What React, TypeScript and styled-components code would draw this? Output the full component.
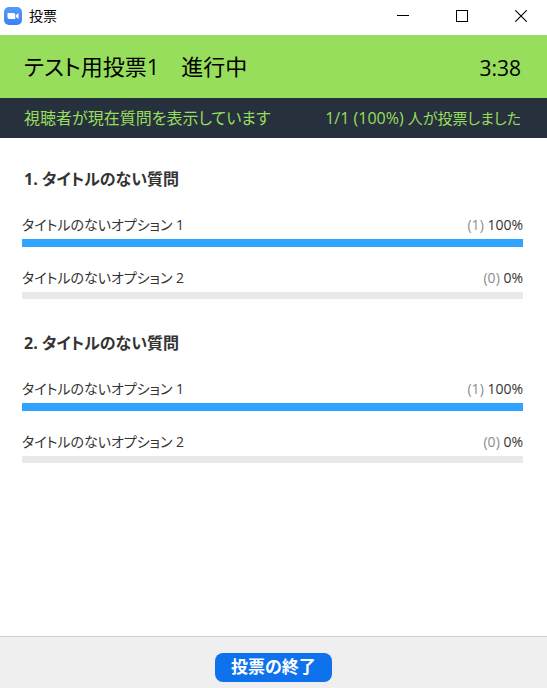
import React from 'react';
import styled, { createGlobalStyle } from 'styled-components';

const GlobalStyle = createGlobalStyle`
  *, *::before, *::after { box-sizing: border-box; }
  body {
    margin: 0;
    background: #fff;
    color: #333;
    font-family: "Open Sans", "Noto Sans CJK JP", sans-serif;
    font-feature-settings: "palt";
  }
`;

const Window = styled.div`
  display: flex;
  flex-direction: column;
  min-height: 100vh;
`;

const TitleBar = styled.header`
  display: flex;
  align-items: center;
  height: 35px;
  padding-left: 4px;
  padding-bottom: 3px;
  color: #000;
`;

const AppName = styled.span`
  flex: 1;
  margin-left: 7px;
  font-size: 14px;
  line-height: 20px;
`;

const WindowControls = styled.div`
  display: flex;
  gap: 7px;
`;

const WindowButton = styled.button`
  display: flex;
  align-items: center;
  justify-content: center;
  width: 52px;
  height: 32px;
  padding: 0;
  border: 0;
  background: transparent;
  color: #000;
`;

const PollHeader = styled.div`
  display: flex;
  align-items: center;
  justify-content: space-between;
  height: 63px;
  padding: 0 26px 0 24px;
  background: #98de5d;
  color: #000;
`;

const PollTitle = styled.h1`
  margin: 0;
  padding-bottom: 2px;
  font-size: 22px;
  font-weight: 400;
  line-height: 32px;
`;

const Timer = styled.time`
  padding-top: 2px;
  font-size: 21px;
  line-height: 28px;
`;

const StatusBar = styled.div`
  display: flex;
  align-items: center;
  justify-content: space-between;
  height: 40px;
  padding: 0 26px 0 24px;
  background: #27313d;
  color: #98de5d;
  font-size: 16px;
  line-height: 24px;
`;

const VoteLabel = styled.span`
  font-size: 15px;
`;

const Content = styled.main`
  flex: 1;
  padding: 29px 24px 24px 22px;
`;

const Question = styled.section`
  margin-bottom: 32px;
`;

const QuestionTitle = styled.h2`
  margin: 0 0 21px 2px;
  font-size: 16px;
  font-weight: 700;
  line-height: 24px;
`;

const OptionList = styled.ul`
  display: grid;
  gap: 18px;
  margin: 0;
  padding: 0;
  list-style: none;
`;

const OptionRow = styled.div`
  display: flex;
  justify-content: space-between;
  height: 27px;
  font-size: 14px;
  line-height: 26px;
`;

const Votes = styled.span`
  color: #8c8c8c;
`;

const Track = styled.div<{ $empty: boolean }>`
  height: ${({ $empty }) => ($empty ? 7 : 8)}px;
  background: #e9e9e9;
`;

const Fill = styled.div`
  height: 100%;
  background: #2ea3ff;
`;

const Footer = styled.footer`
  display: flex;
  justify-content: center;
  height: 52px;
  padding-top: 16px;
  border-top: 1px solid #d0d0d0;
  background: #efefef;
`;

const EndButton = styled.button`
  height: 29px;
  padding: 0 16px 2px;
  border: 0;
  border-radius: 8px;
  background: #0e72ed;
  color: #fff;
  font: inherit;
  font-feature-settings: inherit;
  font-size: 17px;
  font-weight: 700;
  line-height: 24px;
`;

const questions = [1, 2].map((number) => ({
  number,
  title: 'タイトルのない質問',
  options: [
    { label: 'タイトルのないオプション 1', votes: 1, percent: 100 },
    { label: 'タイトルのないオプション 2', votes: 0, percent: 0 },
  ],
}));

const CameraLogo = () => (
  <svg width="18" height="18" viewBox="0 0 18 18" aria-hidden="true">
    <defs>
      <linearGradient id="logo" x1="0" y1="0" x2="0" y2="1">
        <stop offset="0" stopColor="#549bf8" />
        <stop offset="1" stopColor="#3c80f7" />
      </linearGradient>
    </defs>
    <rect width="18" height="18" rx="5" fill="url(#logo)" />
    <path d="M3.5 6h6a1.8 1.8 0 0 1 1.8 1.8V12h-6a1.8 1.8 0 0 1-1.8-1.8zM12 8l2.6-1.9v5.8L12 10z" fill="#fff" />
  </svg>
);

export default function App() {
  return (
    <Window>
      <GlobalStyle />
      <TitleBar>
        <CameraLogo />
        <AppName>投票</AppName>
        <WindowControls>
          <WindowButton aria-label="最小化">
            <svg width="12" height="12" viewBox="0 0 12 12" stroke="currentColor" shapeRendering="crispEdges">
              <path d="M0 5.5h12" />
            </svg>
          </WindowButton>
          <WindowButton aria-label="最大化">
            <svg width="12" height="12" viewBox="0 0 12 12" fill="none" stroke="currentColor" shapeRendering="crispEdges">
              <path d="M.5.5h11v11H.5z" />
            </svg>
          </WindowButton>
          <WindowButton aria-label="閉じる">
            <svg width="12" height="12" viewBox="0 0 12 12" stroke="currentColor" strokeWidth="1.1">
              <path d="M.2.2l11.6 11.6M11.8.2L.2 11.8" />
            </svg>
          </WindowButton>
        </WindowControls>
      </TitleBar>
      <PollHeader>
        <PollTitle>テスト用投票1　進行中</PollTitle>
        <Timer>3:38</Timer>
      </PollHeader>
      <StatusBar>
        <span>視聴者が現在質問を表示しています</span>
        <span>1/1 (100%) <VoteLabel>人が投票しました</VoteLabel></span>
      </StatusBar>
      <Content>
        {questions.map((question) => (
          <Question key={question.number}>
            <QuestionTitle>{question.number}. {question.title}</QuestionTitle>
            <OptionList>
              {question.options.map((option) => (
                <li key={option.label}>
                  <OptionRow>
                    <span>{option.label}</span>
                    <span><Votes>({option.votes})</Votes> {option.percent}%</span>
                  </OptionRow>
                  <Track
                    $empty={option.percent === 0}
                    role="progressbar"
                    aria-label={option.label}
                    aria-valuenow={option.percent}
                  >
                    <Fill style={{ width: `${option.percent}%` }} />
                  </Track>
                </li>
              ))}
            </OptionList>
          </Question>
        ))}
      </Content>
      <Footer>
        <EndButton>投票の終了</EndButton>
      </Footer>
    </Window>
  );
}
